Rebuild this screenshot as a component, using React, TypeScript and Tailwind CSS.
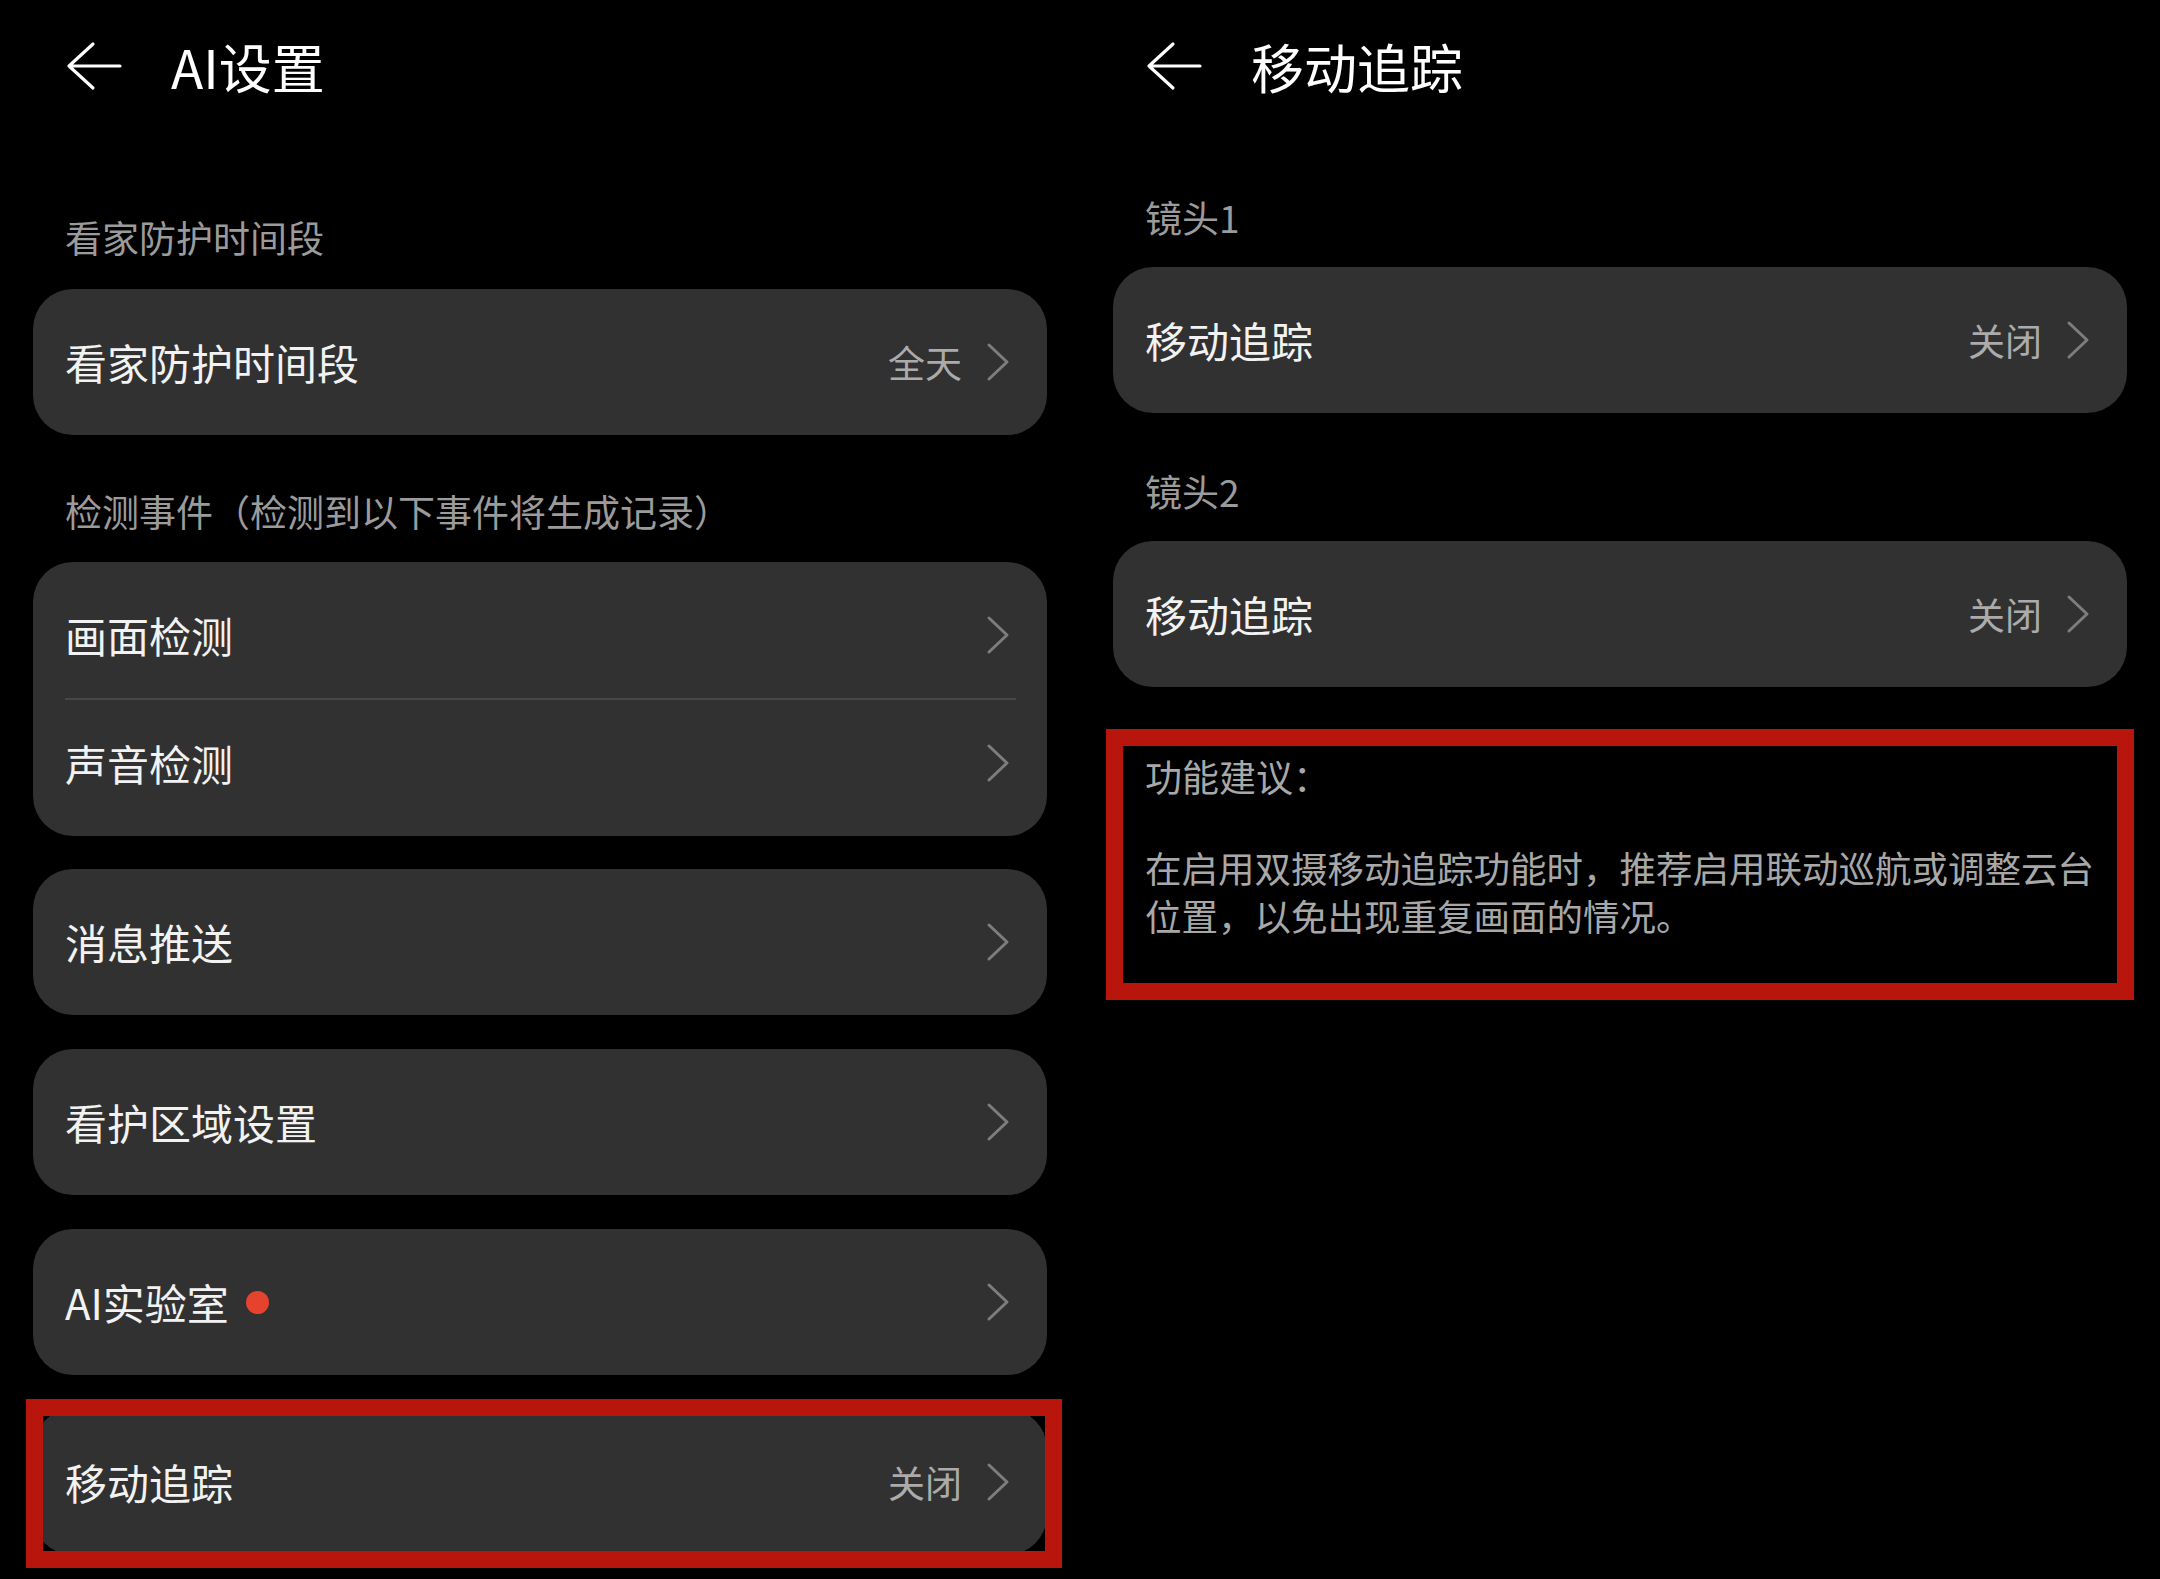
import React from 'react';

const FONT = { fontFamily: '"Noto Sans CJK SC", "Noto Sans", sans-serif' };

function BackArrow() {
  return (
    <svg width="56" height="50" viewBox="0 0 56 50" fill="none" className="shrink-0">
      <path d="M27 3 L3 25 L27 47 M3 25 L54 25" stroke="#ffffff" strokeWidth="3.2" strokeLinecap="round" strokeLinejoin="round" />
    </svg>);
}

function Chevron() {
  return (
    <svg width="24" height="40" viewBox="0 0 24 40" fill="none" className="shrink-0">
      <path d="M3 3 L21 20 L3 37" stroke="#7d7d7d" strokeWidth="3" strokeLinecap="round" strokeLinejoin="round" />
    </svg>);
}

interface RowProps {
  label: React.ReactNode;
  value?: string;
}

function RowBody({ label, value }: RowProps) {
  return (
    <>
      <div className="flex-1 flex items-center text-[42px] text-[#f2f2f2] leading-none">{label}</div>
      {value &&
      <span className="text-[37px] text-[#ababab] leading-none mr-[24px]">{value}</span>
      }
      <Chevron />
    </>);
}

function Row(props: RowProps) {
  return (
    <div className="h-[126px] flex items-center pl-[32px] pr-[37px]">
      <RowBody {...props} />
    </div>);
}

function Card(props: RowProps) {
  return (
    <div className="h-[146px] rounded-[40px] bg-[#313131] flex items-center pl-[32px] pr-[37px]">
      <RowBody {...props} />
    </div>);
}

function Header({ title }: { title: string }) {
  return (
    <div className="h-[132px] flex items-center pl-[66px] gap-[49px]">
      <BackArrow />
      <span className="text-[53px] text-white leading-none">{title}</span>
    </div>);
}

function SectionLabel({ text, className }: { text: string; className: string }) {
  return (
    <div className={`pl-[32px] text-[37px] leading-[50px] text-[#9b9b9b] ${className}`}>{text}</div>);
}

function AiSettings() {
  return (
    <div className="w-[1080px] shrink-0">
      <Header title="AI设置" />
      <div className="px-[33px]">
        <SectionLabel text="看家防护时间段" className="pt-[80px] pb-[27px]" />
        <Card label="看家防护时间段" value="全天" />
        <SectionLabel text="检测事件（检测到以下事件将生成记录）" className="pt-[51px] pb-[26px]" />
        <div className="rounded-[40px] bg-[#313131] py-[10px]">
          <Row label="画面检测" />
          <div className="h-[2px] bg-[#484848] ml-[32px] mr-[31px]" />
          <Row label="声音检测" />
        </div>
        <div className="flex flex-col gap-[34px] mt-[33px]">
          <Card label="消息推送" />
          <Card label="看护区域设置" />
          <Card
            label={
            <>
                <span>AI实验室</span>
                <span className="w-[23px] h-[23px] rounded-full bg-[#e5432d] ml-[17px]" />
              </>
            } />

          <div className="relative">
            <Card label="移动追踪" value="关闭" />
            <div className="absolute -left-[7px] -right-[15px] -top-[10px] -bottom-[13px] border-[17px] border-[#b8160c] pointer-events-none" />
          </div>
        </div>
      </div>
    </div>);
}

function MotionTracking() {
  return (
    <div className="w-[1080px] shrink-0">
      <Header title="移动追踪" />
      <div className="px-[33px]">
        <SectionLabel text="镜头1" className="pt-[60px] pb-[25px]" />
        <Card label="移动追踪" value="关闭" />
        <SectionLabel text="镜头2" className="pt-[53px] pb-[25px]" />
        <Card label="移动追踪" value="关闭" />
        <div className="mt-[42px] -mx-[7px] border-[17px] border-[#b8160c] pl-[22px] pt-[6px] pb-[43px]">
          <div className="text-[37px] leading-[48px] text-[#a8a8a8]">功能建议：</div>
          <p className="mt-[44px] w-[960px] text-[36.5px] leading-[48px] text-[#a8a8a8]">
            在启用双摄移动追踪功能时，推荐启用联动巡航或调整云台位置，以免出现重复画面的情况。
          </p>
        </div>
      </div>
    </div>);
}

export default function App() {
  return (
    <div className="w-[2160px] h-[1579px] bg-black flex overflow-hidden" style={FONT}>
      <AiSettings />
      <MotionTracking />
    </div>);
}
